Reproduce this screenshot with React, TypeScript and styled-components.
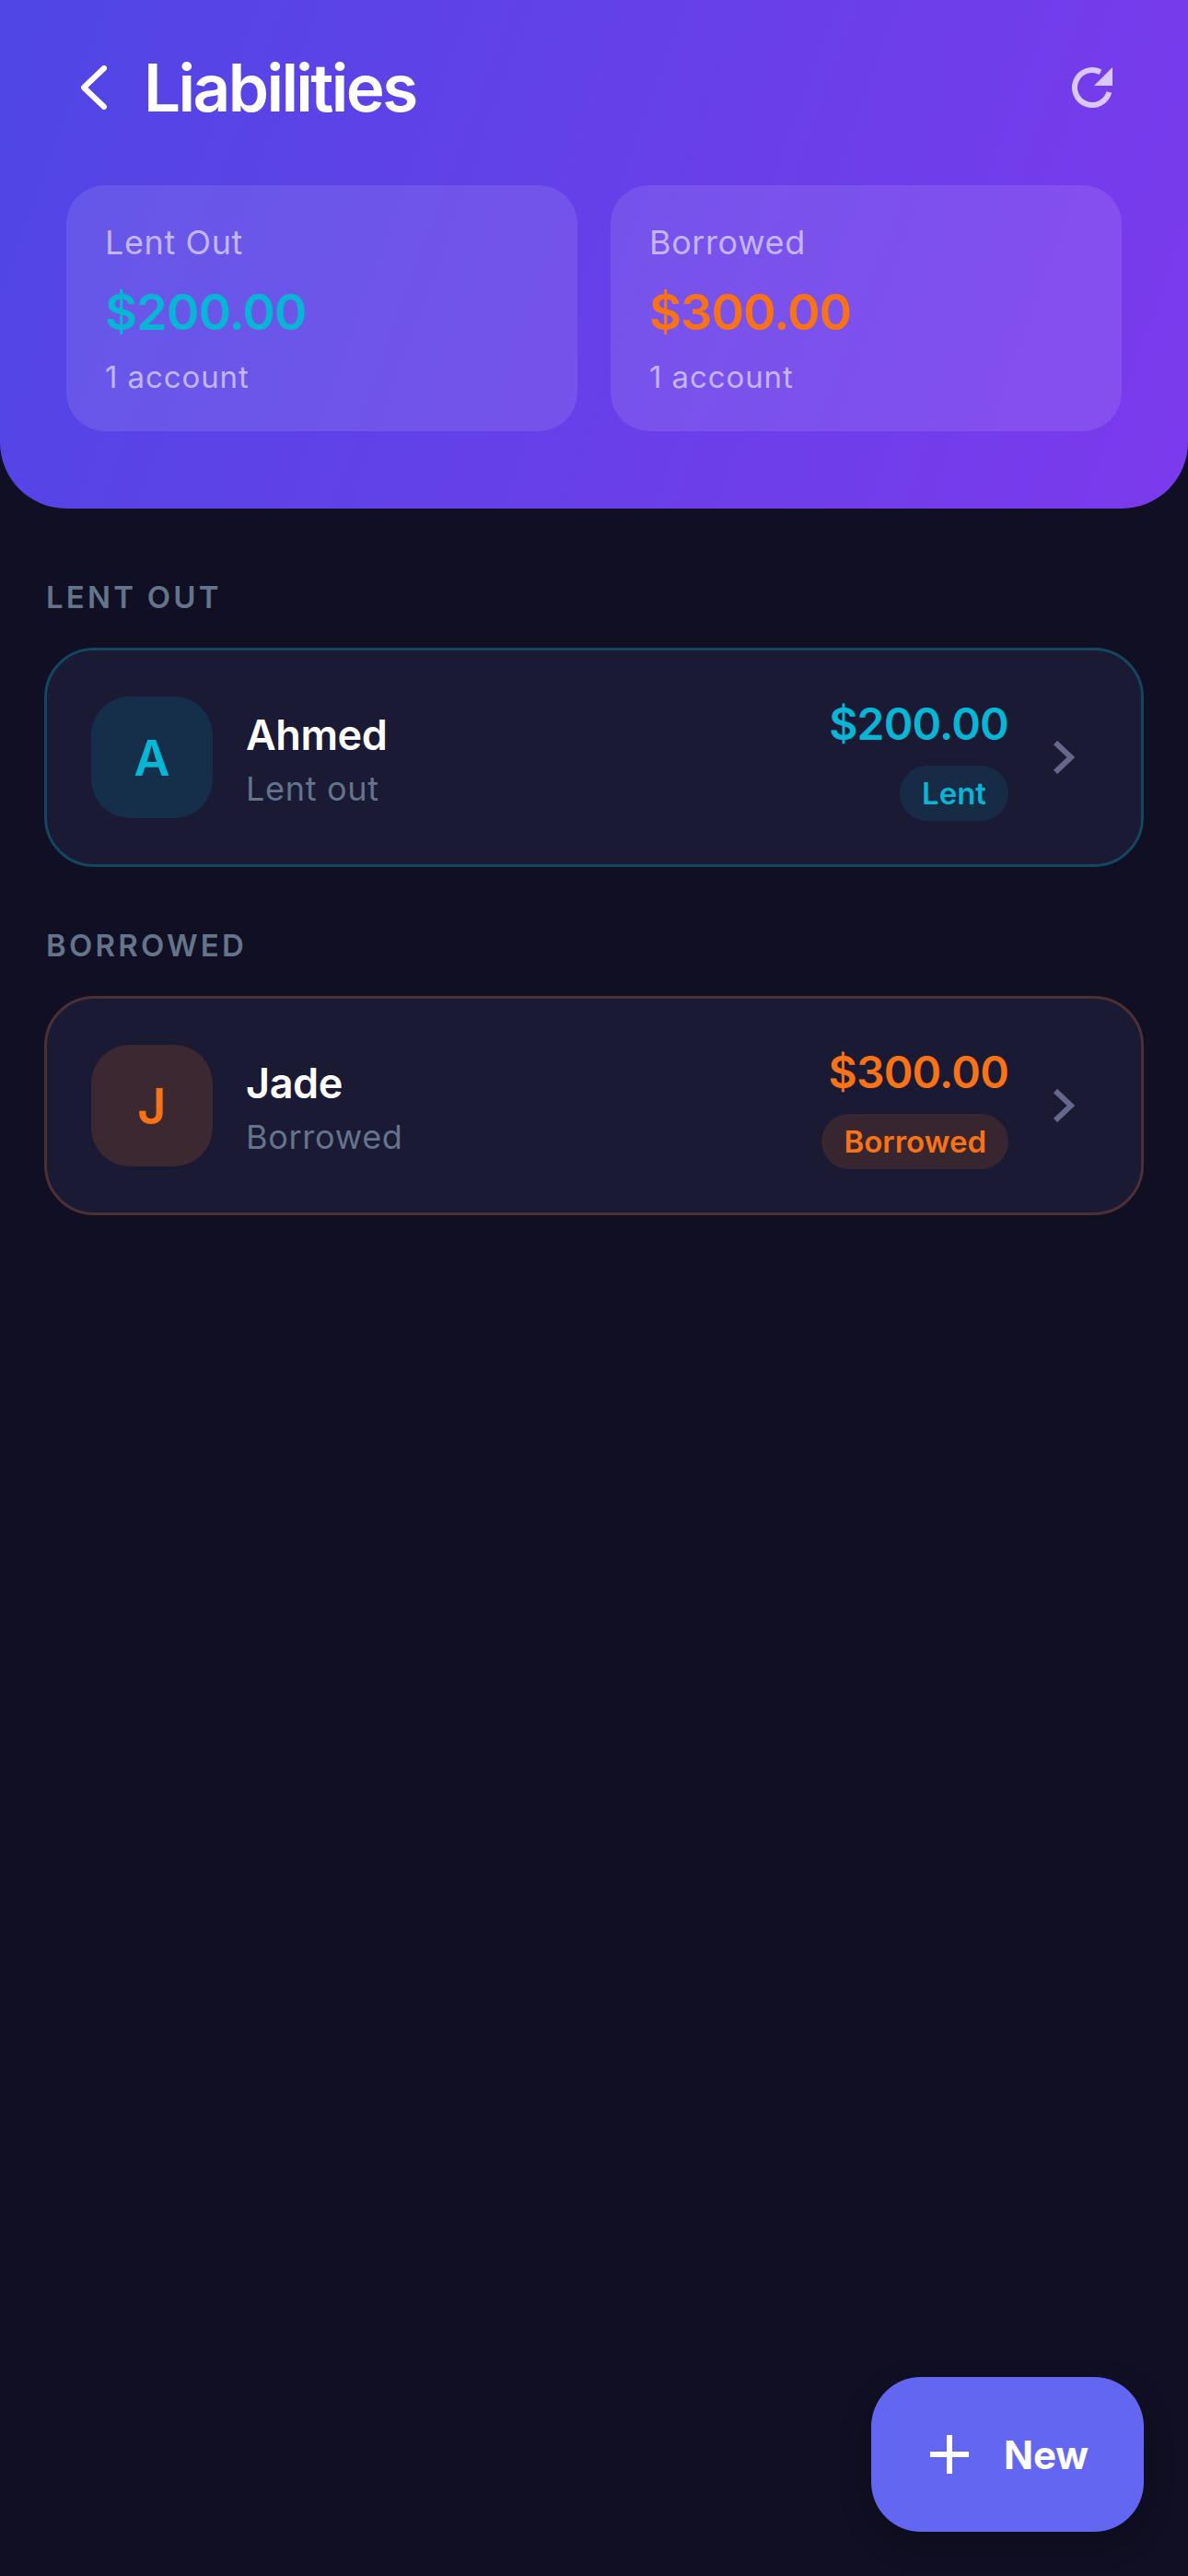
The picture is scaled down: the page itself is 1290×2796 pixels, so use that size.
import React from "react";
import styled, { createGlobalStyle } from "styled-components";

const Global = createGlobalStyle`
  html, body { margin: 0; padding: 0; background: #100f23; }
  body { font-family: Inter, "Noto Sans", sans-serif; }
  * { box-sizing: border-box; }
`;
const Page = styled.div`
  position: relative; width: 1290px; height: 2796px; background: #100f23; overflow: hidden;
`;
const Header = styled.header`
  height: 552px; padding: 59px 72px 0;
  background: linear-gradient(110deg, #4f46e5 0%, #7c3aed 100%);
  border-radius: 0 0 72px 72px;
`;
const TopRow = styled.div`
  display: flex; align-items: center; height: 72px; margin-bottom: 70px; padding: 0 10px 0 16px;
`;
const Title = styled.h1`
  flex: 1; margin: 0 0 0 40px; font-size: 71px; line-height: 72px; font-weight: 600; color: #fff; letter-spacing: -2.6px;
`;
const Stats = styled.div`
  display: grid; grid-template-columns: 1fr 1fr; gap: 36px;
`;
const StatCard = styled.div`
  height: 267px; padding: 40px 42px; border-radius: 42px; background: rgba(255,255,255,.1);
`;
const StatLabel = styled.div`
  font-size: 36px; line-height: 44px; color: #c4b5fd; letter-spacing: .6px;
`;
const StatAmount = styled.div<{ $c: string }>`
  margin-top: 22px; font-size: 54px; line-height: 64px; font-weight: 600; color: ${p => p.$c}; letter-spacing: -1px;
`;
const StatSub = styled.div`
  margin-top: 18px; font-size: 33px; line-height: 40px; color: #c4b5fd; letter-spacing: .9px;
`;
const Main = styled.main`
  padding: 76px 48px 0;
`;
const SectionLabel = styled.h2`
  margin: 0 0 35px 2px; font-size: 33px; line-height: 40px; font-weight: 600; color: #64748b; letter-spacing: 3.2px;
`;
const Account = styled.div<{ $b: string }>`
  display: flex; align-items: center; height: 238px; padding: 0 72px 0 48px; margin-bottom: 65px;
  background: #1a1a35; border: 3px solid ${p => p.$b}; border-radius: 54px;
`;
const Avatar = styled.div<{ $bg: string; $c: string }>`
  display: flex; align-items: center; justify-content: center; width: 132px; height: 132px;
  border-radius: 42px; background: ${p => p.$bg}; color: ${p => p.$c}; font-size: 54px; font-weight: 600;
`;
const Info = styled.div`
  flex: 1; margin-left: 36px; padding-top: 3px;
`;
const Name = styled.div`
  font-size: 45px; line-height: 56px; font-weight: 600; color: #fff; letter-spacing: -.4px;
`;
const Sub = styled.div`
  margin-top: 8px; font-size: 36px; line-height: 44px; color: #64748b; letter-spacing: .7px;
`;
const Right = styled.div`
  display: flex; flex-direction: column; align-items: flex-end; margin-right: 48px; padding-top: 2px;
`;
const Amount = styled.div<{ $c: string }>`
  font-size: 48px; line-height: 60px; font-weight: 600; color: ${p => p.$c}; letter-spacing: -.8px;
`;
const Badge = styled.div<{ $bg: string; $c: string }>`
  margin-top: 15px; height: 60px; padding: 0 24px; display: flex; align-items: center; border-radius: 30px;
  background: ${p => p.$bg}; color: ${p => p.$c}; font-size: 33px; font-weight: 600;
`;
const Fab = styled.button`
  position: absolute; left: 946px; top: 2580px; width: 296px; height: 168px;
  display: flex; align-items: center; justify-content: center; gap: 38px; padding: 0 0 0 4px;
  border: 0; border-radius: 54px; background: #6366f1; color: #fff;
  font: 700 42px Inter, sans-serif;
  box-shadow: 0 12px 36px rgba(0,0,0,.15);
`;

const Back = () => (
  <svg width="28" height="48" viewBox="0 0 28 48" fill="none">
    <path d="M25 3 L3 24 L25 45" stroke="#fff" strokeWidth="6" strokeLinecap="round" strokeLinejoin="round" />
  </svg>
);
const Refresh = () => (
  <svg width="44" height="44" viewBox="0 0 44 44" fill="none">
    <path d="M31 5.3 A19 19 0 1 0 40.3 27" stroke="#d9c8fb" strokeWidth="6" />
    <path d="M44 0 V20 H24 Z" fill="#d9c8fb" />
  </svg>
);
const Chevron = () => (
  <svg width="24" height="36" viewBox="0 0 24 36" fill="none">
    <path d="M3 2 L20 18 L3 34" stroke="#64688a" strokeWidth="6" />
  </svg>
);
const Plus = () => (
  <svg width="42" height="42" viewBox="0 0 42 42" fill="none">
    <path d="M21 0 V42 M0 21 H42" stroke="#fff" strokeWidth="6" />
  </svg>
);

const cyan = "#06b6d4", orange = "#f97316";

export default function App() {
  return (
    <Page>
      <Global />
      <Header>
        <TopRow>
          <Back />
          <Title>Liabilities</Title>
          <Refresh />
        </TopRow>
        <Stats>
          <StatCard>
            <StatLabel>Lent Out</StatLabel>
            <StatAmount $c={cyan}>$200.00</StatAmount>
            <StatSub>1 account</StatSub>
          </StatCard>
          <StatCard>
            <StatLabel>Borrowed</StatLabel>
            <StatAmount $c={orange}>$300.00</StatAmount>
            <StatSub>1 account</StatSub>
          </StatCard>
        </Stats>
      </Header>
      <Main>
        <SectionLabel>LENT OUT</SectionLabel>
        <Account $b="#14465e">
          <Avatar $bg="#152f4a" $c={cyan}>A</Avatar>
          <Info>
            <Name>Ahmed</Name>
            <Sub>Lent out</Sub>
          </Info>
          <Right>
            <Amount $c={cyan}>$200.00</Amount>
            <Badge $bg="#172b47" $c={cyan}>Lent</Badge>
          </Right>
          <Chevron />
        </Account>
        <SectionLabel>BORROWED</SectionLabel>
        <Account $b="#4d3034">
          <Avatar $bg="#3c2830" $c={orange}>J</Avatar>
          <Info>
            <Name>Jade</Name>
            <Sub>Borrowed</Sub>
          </Info>
          <Right>
            <Amount $c={orange}>$300.00</Amount>
            <Badge $bg="#37252f" $c={orange}>Borrowed</Badge>
          </Right>
          <Chevron />
        </Account>
      </Main>
      <Fab><Plus />New</Fab>
    </Page>
  );
}
